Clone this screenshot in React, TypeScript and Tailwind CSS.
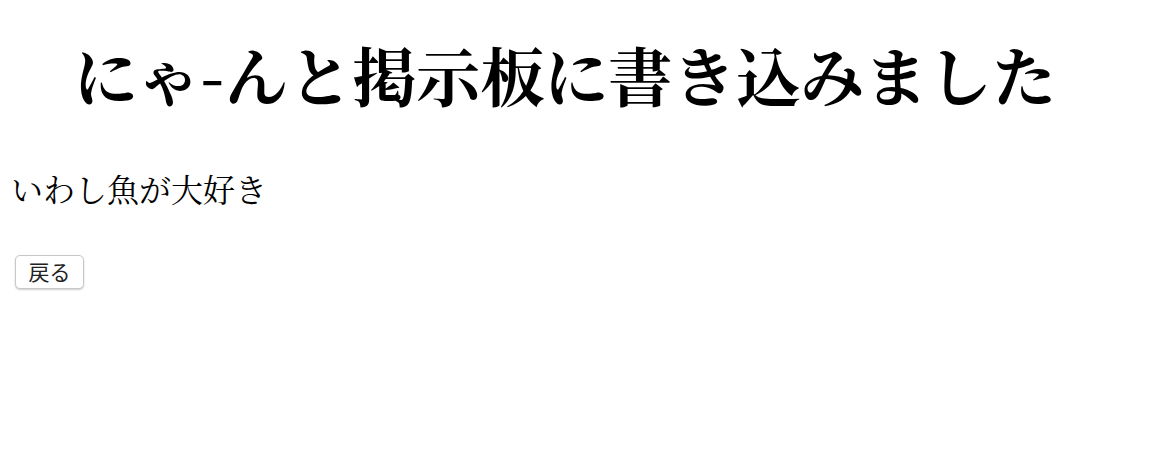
export default function App() {
  return (
    <main className="min-h-[474px] bg-white px-2 text-black">
      <h1 className="pr-[26px] pt-[30px] text-center text-[64px] font-bold leading-[86px] [font-family:'Noto_Serif_CJK_JP','Noto_Sans_CJK_JP',serif]">
        にゃ-んと掲示板に書き込みました
      </h1>
      <p className="mt-[52px] pl-[3px] text-[32px] leading-[40px] [font-family:'Noto_Serif_CJK_JP','Noto_Sans_CJK_JP',serif]">
        いわし魚が大好き
      </p>
      <div className="mt-[47px] pl-[7px]">
        <button className="h-[34px] w-[69px] rounded-[5px] border border-[#c8c8c8] bg-white text-[21px] text-[#222] shadow-[0_1px_2px_rgba(0,0,0,0.2)] [font-family:'Noto_Sans_CJK_JP',sans-serif]">
          戻る
        </button>
      </div>
    </main>
  );
}
